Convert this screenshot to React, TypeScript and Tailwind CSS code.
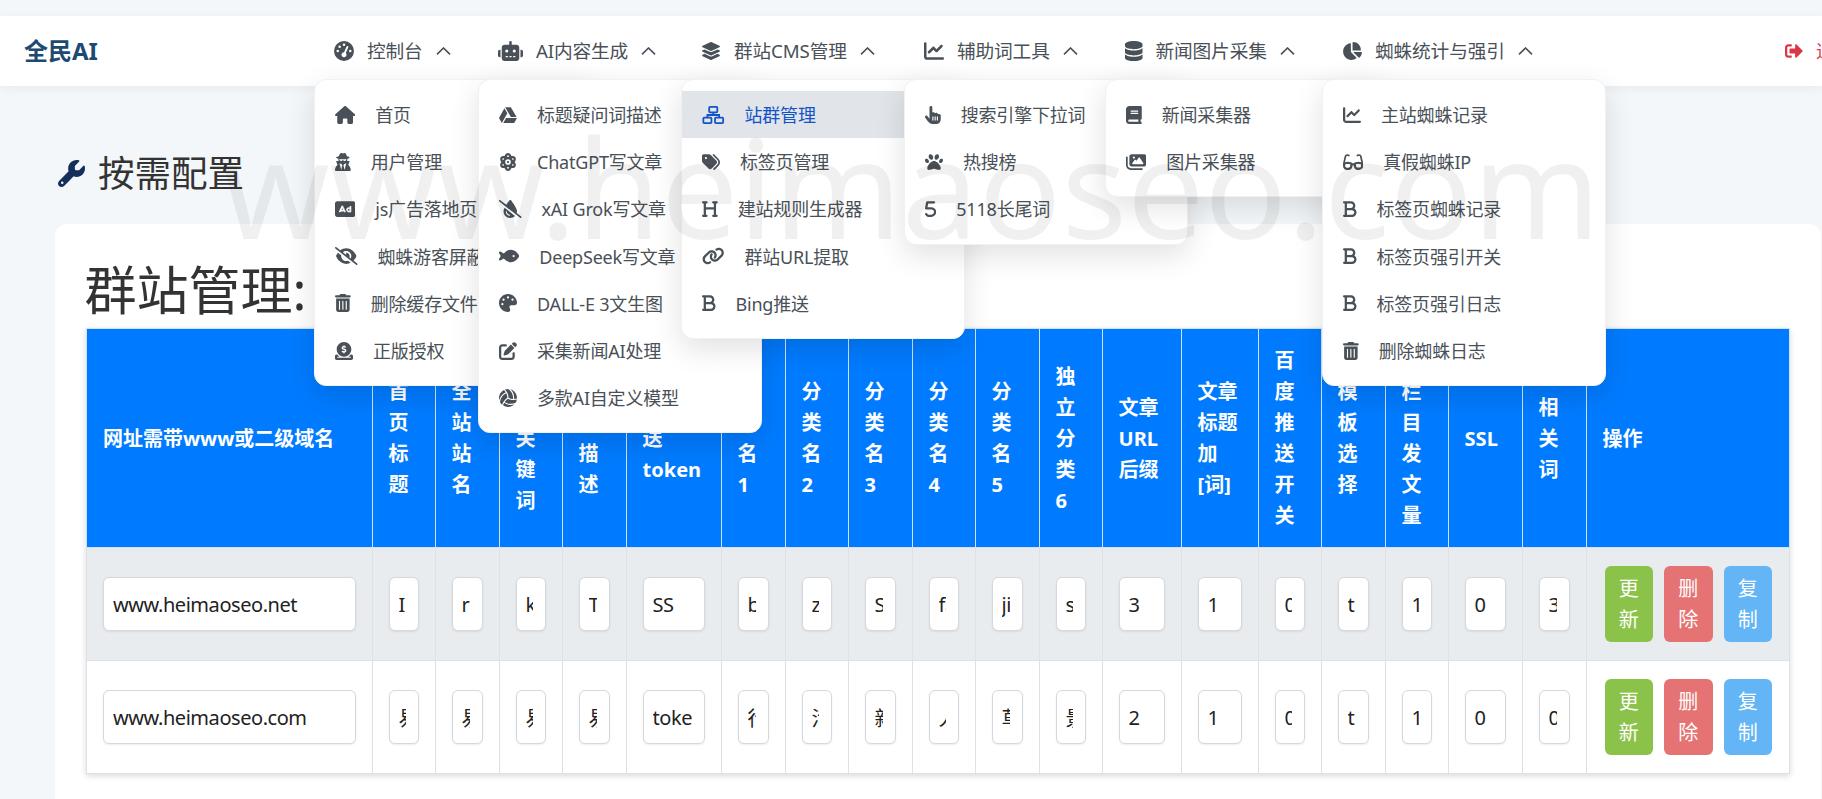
import type { IconType } from "react-icons";
import {
  Fa5, FaAtom, FaBold, FaBook, FaChartLine, FaChartPie, FaCircleDollarToSlot, FaDatabase, FaDropletSlash, FaEyeSlash,
  FaFish, FaGaugeHigh, FaGlasses, FaGoogleDrive, FaHandPointer, FaHeading, FaHouse, FaImages, FaLayerGroup, FaLink,
  FaPalette, FaPaw, FaPenToSquare, FaRectangleAd, FaRobot, FaTags, FaTrashCan, FaUserSecret, FaVolleyball, FaWrench,
} from "react-icons/fa6";
import { FaSignOutAlt } from "react-icons/fa";

type Icon = IconType | ((props: { className?: string }) => React.ReactElement);
type MenuItem = { icon: Icon; iconW: string; label: string; active?: boolean };
type Menu = { icon: Icon; iconW: string; width: string; label: string; items: MenuItem[] };

// outlined sitemap, the icon package only has the filled one
function SitemapOutline({ className }: { className?: string }) {
  return (
    <svg viewBox="0 0 24 20" className={`fill-none stroke-current stroke-2 ${className}`}>
      <rect x="7.5" y="1" width="9" height="6" rx="1" />
      <path d="M12 7v3M5.5 13v-3h13v3" />
      <rect x="1" y="13" width="9" height="6" rx="1" />
      <rect x="14" y="13" width="9" height="6" rx="1" />
    </svg>
  );
}

const menus: Menu[] = [
  {
    icon: FaGaugeHigh,
    iconW: "w-[20px]",
    width: "w-[164px]",
    label: "控制台",
    items: [
      { icon: FaHouse, iconW: "w-[20.25px]", label: "首页" },
      { icon: FaUserSecret, iconW: "w-[15.75px]", label: "用户管理" },
      { icon: FaRectangleAd, iconW: "w-[20.25px]", label: "js广告落地页" },
      { icon: FaEyeSlash, iconW: "w-[22.5px]", label: "蜘蛛游客屏蔽" },
      { icon: FaTrashCan, iconW: "w-[15.75px]", label: "删除缓存文件" },
      { icon: FaCircleDollarToSlot, iconW: "w-[18px]", label: "正版授权" },
    ],
  },
  {
    icon: FaRobot,
    iconW: "w-[25px]",
    width: "w-[203px]",
    label: "AI内容生成",
    items: [
      { icon: FaGoogleDrive, iconW: "w-[18px]", label: "标题疑问词描述" },
      { icon: FaAtom, iconW: "w-[18px]", label: "ChatGPT写文章" },
      { icon: FaDropletSlash, iconW: "w-[22.5px]", label: "xAI Grok写文章" },
      { icon: FaFish, iconW: "w-[20.25px]", label: "DeepSeek写文章" },
      { icon: FaPalette, iconW: "w-[18px]", label: "DALL-E 3文生图" },
      { icon: FaPenToSquare, iconW: "w-[18px]", label: "采集新闻AI处理" },
      { icon: FaVolleyball, iconW: "w-[18px]", label: "多款AI自定义模型" },
    ],
  },
  {
    icon: FaLayerGroup,
    iconW: "w-[20px]",
    width: "w-[223px]",
    label: "群站CMS管理",
    items: [
      { icon: SitemapOutline, iconW: "w-[22.5px]", label: "站群管理", active: true },
      { icon: FaTags, iconW: "w-[18px]", label: "标签页管理" },
      { icon: FaHeading, iconW: "w-[15.75px]", label: "建站规则生成器" },
      { icon: FaLink, iconW: "w-[22.5px]", label: "群站URL提取" },
      { icon: FaBold, iconW: "w-[13.5px]", label: "Bing推送" },
    ],
  },
  {
    icon: FaChartLine,
    iconW: "w-[20px]",
    width: "w-[201px]",
    label: "辅助词工具",
    items: [
      { icon: FaHandPointer, iconW: "w-[15.75px]", label: "搜索引擎下拉词" },
      { icon: FaPaw, iconW: "w-[18px]", label: "热搜榜" },
      { icon: Fa5, iconW: "w-[11.25px]", label: "5118长尾词" },
    ],
  },
  {
    icon: FaDatabase,
    iconW: "w-[17.5px]",
    width: "w-[217px]",
    label: "新闻图片采集",
    items: [
      { icon: FaBook, iconW: "w-[15.75px]", label: "新闻采集器" },
      { icon: FaImages, iconW: "w-[20.25px]", label: "图片采集器" },
    ],
  },
  {
    icon: FaChartPie,
    iconW: "w-[20px]",
    width: "w-[240px]",
    label: "蜘蛛统计与强引",
    items: [
      { icon: FaChartLine, iconW: "w-[18px]", label: "主站蜘蛛记录" },
      { icon: FaGlasses, iconW: "w-[20.25px]", label: "真假蜘蛛IP" },
      { icon: FaBold, iconW: "w-[13.5px]", label: "标签页蜘蛛记录" },
      { icon: FaBold, iconW: "w-[13.5px]", label: "标签页强引开关" },
      { icon: FaBold, iconW: "w-[13.5px]", label: "标签页强引日志" },
      { icon: FaTrashCan, iconW: "w-[15.75px]", label: "删除蜘蛛日志" },
    ],
  },
];

const columns = [
  { title: "网址需带www或二级域名", width: "w-[285.6px]" },
  { title: "首页标题", width: "w-[63px]" },
  { title: "全站站名", width: "w-[64px]" },
  { title: "首页关键词", width: "w-[63px]" },
  { title: "首页描述", width: "w-[64px]" },
  { title: "百度推送token", width: "w-[95px]" },
  { title: "分类名1", width: "w-[64px]" },
  { title: "分类名2", width: "w-[63px]" },
  { title: "分类名3", width: "w-[64px]" },
  { title: "分类名4", width: "w-[63px]" },
  { title: "分类名5", width: "w-[64px]" },
  { title: "独立分类6", width: "w-[63px]" },
  { title: "文章URL后缀", width: "w-[79px]" },
  { title: "文章标题加[词]", width: "w-[77px]" },
  { title: "百度推送开关", width: "w-[63px]" },
  { title: "模板选择", width: "w-[64px]" },
  { title: "每栏目发文量", width: "w-[63px]" },
  { title: "SSL", width: "w-[74px]" },
  { title: "相关词", width: "w-[64px]" },
  { title: "操作", width: "w-[203.4px]" },
];

const rows = [
  {
    bg: "bg-[#e9ecef]",
    values: ["www.heimaoseo.net", "Index", "rrr", "keywords", "Title", "SS", "baidu", "zixun", "Show", "fangchan", "jiaoyu", "service", "3", "1", "0", "t", "1", "0", "3"],
  },
  {
    bg: "bg-white",
    values: ["www.heimaoseo.com", "易", "易", "易", "易", "token", "行", "活", "新", "人", "草", "景", "2", "1", "0", "t", "1", "0", "0"],
  },
];

function Chevron() {
  return (
    <svg viewBox="0 0 15 8" className="ml-[13px] h-[8px] w-[15px] shrink-0 fill-none stroke-[#495057] stroke-[1.6]">
      <polyline points="1,7.4 7.5,1 14,7.4" />
    </svg>
  );
}

function NavMenu({ menu }: { menu: Menu }) {
  const Icon = menu.icon;
  return (
    <div className={`relative flex h-full shrink-0 items-center pl-5 ${menu.width}`}>
      <Icon className={`h-[20px] shrink-0 text-[#495057] ${menu.iconW}`} />
      <span className="ml-[13px] whitespace-nowrap text-[18.7px] tracking-[-0.15px] text-[#495057]">{menu.label}</span>
      <Chevron />
      <div className="absolute left-0 top-[63px] w-[284px] rounded-[12px] border border-[#f1f1f1] bg-white pb-[11px] pt-[11px] shadow-[0_10px_30px_rgba(0,0,0,0.12)]">
        {menu.items.map((item) => {
          const ItemIcon = item.icon;
          return (
            <div
              key={item.label}
              className={`flex h-[47.2px] items-center gap-5 overflow-hidden whitespace-nowrap px-5 text-[18px] tracking-[-0.2px] ${
                item.active ? "bg-[#e1e4e8] text-[#1254c8]" : "text-[#495057]"
              }`}
            >
              <ItemIcon className={`h-[18px] shrink-0 ${item.iconW}`} />
              <span className="mt-[2px]">{item.label}</span>
            </div>
          );
        })}
      </div>
    </div>
  );
}

export default function App() {
  return (
    <div
      className="relative h-[799px] w-[1822px] overflow-hidden bg-[#f4f7f9] pt-4"
      style={{ fontFamily: '"Noto Sans", "Noto Sans CJK SC", sans-serif' }}
    >
      {/* navbar */}
      <nav className="relative z-10 flex h-[70px] items-center bg-white pl-6 shadow-[0_2px_10px_rgba(0,0,0,0.05)]">
        <div className="w-[290px] shrink-0 whitespace-nowrap text-[24px] font-bold text-[#1e4a72]">全民AI</div>
        {menus.map((menu) => (
          <NavMenu key={menu.label} menu={menu} />
        ))}
        <div className="ml-[223px] flex shrink-0 items-center gap-[13px] whitespace-nowrap text-[18px] text-[#dc3545]">
          <FaSignOutAlt className="h-[18px] w-[18px]" />
          <span>退出登录</span>
        </div>
      </nav>

      <h3 className="ml-[58px] mt-[62px] flex h-[50px] items-center gap-[13px] text-[36.5px] leading-none text-[#333]">
        <FaWrench className="h-[27px] w-[27px] text-[#14305a]" />
        按需配置
      </h3>

      <div className="ml-[55px] mt-[26px] w-[1766px] rounded-[12px] bg-white pb-10 pl-[31px] pr-[32px] pt-[35px]">
        <h1 className="-ml-[1.5px] mb-[7px] text-[52px] leading-[62px] text-[#333]">群站管理:</h1>
        <table className="w-[1703px] table-fixed border-collapse shadow-[0_2px_6px_rgba(0,0,0,0.15)]">
          <thead>
            <tr className="bg-[#007bff] text-white">
              {columns.map((col) => (
                <th
                  key={col.title}
                  className={`${col.width} border border-[#cfe2f7] p-4 text-left align-middle text-[20px] font-bold leading-[31px]`}
                >
                  {col.title}
                </th>
              ))}
            </tr>
          </thead>
          <tbody>
            {rows.map((row) => (
              <tr key={row.values[0]} className={row.bg}>
                {row.values.map((value, i) => (
                  <td key={i} className="border border-[#dee2e6] p-4 align-middle">
                    <input
                      readOnly
                      value={value}
                      className="h-[54px] w-full rounded-[6px] border border-[#d5d8dc] bg-white pl-[9px] pr-[12px] text-[20px] tracking-[-0.45px] text-[#222] shadow-[0_1px_2px_rgba(0,0,0,0.08)] outline-none"
                    />
                  </td>
                ))}
                <td className="border border-[#dee2e6] py-[18px] pl-[18px] pr-0 align-middle">
                  <div className="flex gap-[11px]">
                    <button className="w-[48.5px] rounded-[6px] bg-[#8bc34a] px-[10px] py-[7px] text-[20px] leading-[31px] text-white">更新</button>
                    <button className="w-[48.5px] rounded-[6px] bg-[#e57373] px-[10px] py-[7px] text-[20px] leading-[31px] text-white">删除</button>
                    <button className="w-[48.5px] rounded-[6px] bg-[#64b5f6] px-[10px] py-[7px] text-[20px] leading-[31px] text-white">复制</button>
                  </div>
                </td>
              </tr>
            ))}
          </tbody>
        </table>
      </div>

      {/* watermark sits over everything */}
      <div className="pointer-events-none absolute left-[222px] top-[91px] z-50 whitespace-nowrap text-[137px] leading-[190px] text-black/[0.06]">
        www.heimaoseo.com
      </div>
    </div>
  );
}
